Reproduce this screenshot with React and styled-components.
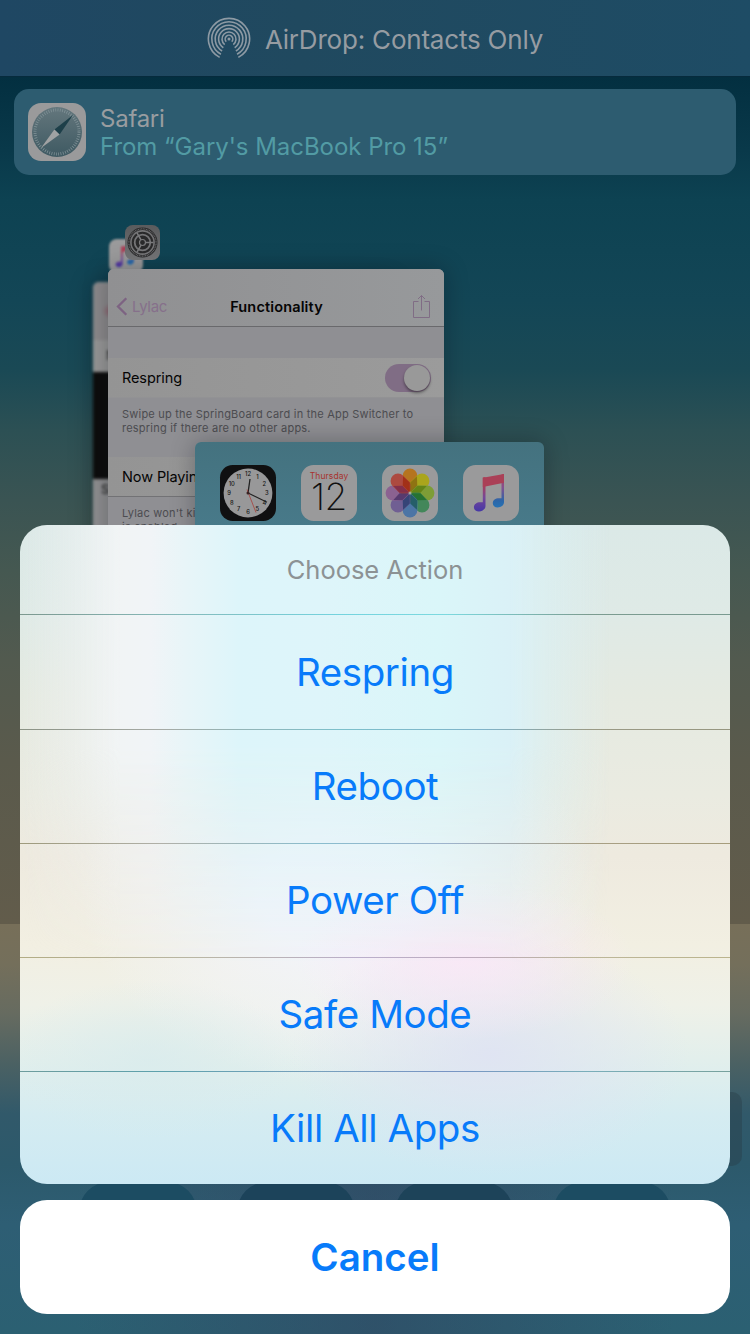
import React from "react";
import styled, { createGlobalStyle } from "styled-components";

const GlobalStyle = createGlobalStyle`
  * { box-sizing: border-box; }
  body { margin: 0; background: #2d5c70; }
`;

const Screen = styled.main`
  position: relative;
  width: 750px;
  height: 1334px;
  overflow: hidden;
  font-family: Inter, "Liberation Sans", sans-serif;
  background: linear-gradient(
    180deg,
    #032f40 76px,
    #09394a 150px,
    #0d4252 200px,
    #134656 300px,
    #1a4955 370px,
    #2c5054 430px,
    #3a5453 500px,
    #455851 570px,
    #525a4f 660px,
    #5a5a4c 760px,
    #625c4b 924px
  );
`;

/* Control panel that rises from the bottom edge, behind the sheet */
const Dock = styled.div`
  position: absolute;
  inset: 924px 0 0;
  background: linear-gradient(90deg, transparent 10%, rgba(52, 60, 92, 0.4) 50%, transparent 90%),
    linear-gradient(
      180deg,
      #776f59 0,
      #746f5b 40px,
      #666b60 90px,
      #4b6163 140px,
      #31596a 190px,
      #2c596b 240px,
      #2e5e74 300px,
      #2b6072 410px
    );
`;

const DockTiles = styled.div`
  position: absolute;
  top: 258px;
  left: 79px;
  display: flex;
  gap: 40px;
`;

const DockTile = styled.span`
  width: 118px;
  height: 118px;
  border-radius: 30px;
  background: ${(p) => p.$tone};
`;

const DockSlider = styled.span`
  position: absolute;
  top: 168px;
  right: 8px;
  width: 60px;
  height: 74px;
  border-radius: 10px;
  background: rgba(40, 60, 70, 0.4);
`;

const Header = styled.header`
  position: relative;
  display: flex;
  align-items: center;
  justify-content: center;
  gap: 14px;
  height: 77px;
  padding-top: 2px;
  border-bottom: 1px solid #062b3d;
  background: linear-gradient(90deg, #1f4763, #20495f 40%, #1e4c65);
  color: #969ca2;
  font-size: 26px;
  letter-spacing: -0.2px;
`;

const HandoffBanner = styled.section`
  position: relative;
  display: flex;
  align-items: center;
  gap: 14px;
  height: 86px;
  margin: 12px 14px 0;
  padding: 0 14px;
  border-radius: 15px;
  background: #2d5c70;
`;

const BannerText = styled.div`
  display: flex;
  flex-direction: column;
  padding-top: 2px;
  font-size: 24px;
  line-height: 28px;
  color: #999da0;
`;

const BannerTitle = styled.span`
  letter-spacing: -0.25px;
`;

const BannerSource = styled.span`
  color: #529ba4;
  letter-spacing: -0.04px;
`;

/* App switcher cards overlap freely, so each one is placed on the canvas */
const Card = styled.article`
  position: absolute;
  left: ${(p) => p.$x}px;
  top: ${(p) => p.$y}px;
  width: ${(p) => p.$w}px;
  height: 640px;
  border-radius: 6px;
  overflow: hidden;
`;

const MusicCard = styled(Card)`
  background: #909092;
  filter: blur(1.4px);
`;

const CardBand = styled.div`
  height: ${(p) => p.$h}px;
  background: ${(p) => p.$tone};
  padding: ${(p) => p.$pad || "0"};
  color: ${(p) => p.$ink || "#333"};
  font-size: 13px;
  font-weight: 600;
`;

const CardShadow = styled.div`
  position: absolute;
  left: ${(p) => p.$x}px;
  top: ${(p) => p.$y}px;
  width: ${(p) => p.$w}px;
  height: 640px;
  border-radius: 6px;
  box-shadow: 0 0 24px rgba(0, 10, 15, 0.3);
`;

const SettingsCard = styled(Card)`
  background: #8f8f93;
  color: #050505;
  font-size: 15px;
`;

const NavBar = styled.div`
  display: grid;
  grid-template-columns: 1fr auto 1fr;
  align-items: center;
  height: 58px;
  padding: 18px 13px 0 8px;
  border-bottom: 1px solid #69696c;
  background: linear-gradient(90deg, #909092, #97999b);
`;

const BackLink = styled.span`
  display: flex;
  align-items: center;
  gap: 4px;
  color: #86708b;
  letter-spacing: -0.3px;
`;

const NavTitle = styled.span`
  padding-left: 6px;
  font-weight: 600;
  font-size: 14.5px;
  letter-spacing: 0.15px;
`;

const NavAction = styled.span`
  display: flex;
  justify-content: flex-end;
`;

const SettingRow = styled.div`
  display: flex;
  align-items: center;
  justify-content: space-between;
  height: ${(p) => p.$h}px;
  margin-top: ${(p) => p.$gap}px;
  padding: 0 13px 0 14px;
  border-bottom: 1px solid ${(p) => p.$line};
  background: linear-gradient(90deg, #949494, #9b9b9b);
  font-size: 14.5px;
  letter-spacing: -0.1px;
`;

const Toggle = styled.span`
  display: flex;
  justify-content: flex-end;
  width: 46px;
  height: 28px;
  padding: 1px;
  border-radius: 14px;
  background: #806d85;

  &::after {
    content: "";
    width: 26px;
    height: 26px;
    border-radius: 50%;
    background: #999;
    box-shadow: 0 2px 3px rgba(0, 0, 0, 0.4);
  }
`;

const Footnote = styled.p`
  margin: 0;
  padding: ${(p) => p.$top}px 14px 0;
  font-size: 11px;
  line-height: 14.3px;
  letter-spacing: 0.22px;
  color: #4c4c50;
  white-space: pre;
`;

const HomeCard = styled(Card)`
  display: flex;
  align-items: flex-start;
  gap: 25px;
  padding: 23px 25px;
  background: linear-gradient(180deg, #44727f, #487a8a 90px);
`;

const AppIcon = styled.div`
  display: flex;
  flex-direction: column;
  align-items: center;
  flex: none;
  width: ${(p) => p.$size}px;
  height: ${(p) => p.$size}px;
  border-radius: ${(p) => p.$size * 0.225}px;
  overflow: hidden;
  background: ${(p) => p.$fill || "#9a9a9b"};
`;

const FloatingIcon = styled(AppIcon)`
  position: absolute;
  left: ${(p) => p.$x}px;
  top: ${(p) => p.$y}px;
  filter: ${(p) => (p.$soft ? "blur(1.3px)" : "none")};
`;

const Weekday = styled.span`
  margin-top: 6px;
  font-size: 8.5px;
  line-height: 11px;
  letter-spacing: 0.1px;
  color: #a8322d;
`;

const DayNumber = styled.span`
  font-size: 37px;
  font-weight: 200;
  line-height: 30px;
  letter-spacing: -0.5px;
  color: #111;
`;

const SheetLayer = styled.div`
  position: absolute;
  inset: 0;
  display: flex;
  flex-direction: column;
  justify-content: flex-end;
  gap: 16px;
  padding: 20px;
`;

const Sheet = styled.section`
  position: relative;
  isolation: isolate;
  border-radius: 27px;
  overflow: hidden;
  background: radial-gradient(ellipse 170px 80px at 445px 435px, rgba(250, 231, 247, 0.85) 0, rgba(250, 231, 247, 0) 100%),
    radial-gradient(ellipse 200px 120px at 470px 530px, rgba(223, 227, 243, 0.9) 0, rgba(223, 227, 243, 0) 100%),
    radial-gradient(ellipse 150px 80px at 130px 535px, rgba(216, 235, 237, 0.7) 0, rgba(216, 235, 237, 0) 100%),
    radial-gradient(ellipse 260px 190px at 320px 370px, rgba(242, 244, 250, 0.95) 30%, rgba(244, 242, 250, 0) 100%),
    linear-gradient(
      180deg,
      #dbe9e7 0,
      #dfeae6 90px,
      #e5eae1 170px,
      #eaebe1 270px,
      #eeeadf 330px,
      #f2efe2 420px,
      #eff1e8 480px,
      #e2efec 535px,
      #d5ecf1 590px,
      #cce9f4 659px
    );

  &::before {
    content: "";
    position: absolute;
    z-index: -1;
    inset: 0 0 220px;
    background: linear-gradient(
      90deg,
      rgba(240, 243, 244, 0) 0,
      rgba(240, 243, 244, 0.5) 55px,
      #f1f4f5 100px,
      #f1f4f7 130px,
      #e8f5f8 165px,
      #ddf5fa 220px,
      #def5fa 300px,
      #daf6f9 420px,
      #daf1f7 490px,
      rgba(218, 241, 245, 0.6) 525px,
      rgba(222, 240, 240, 0) 590px
    );
    mask-image: linear-gradient(180deg, #000 0, #000 220px, transparent 100%);
  }
`;

const SheetTitle = styled.div`
  display: flex;
  align-items: center;
  justify-content: center;
  height: 89px;
  color: #8c9294;
  font-size: 25.5px;
  letter-spacing: -0.02px;
`;

const Separator = styled.div`
  height: 1px;
  background: linear-gradient(90deg, ${(p) => p.$tones.join(", ")});
`;

const SheetButton = styled.button`
  display: flex;
  align-items: center;
  justify-content: center;
  width: 100%;
  height: ${(p) => p.$h}px;
  padding: 0 0 ${(p) => p.$lift || 0}px;
  border: 0;
  background: none;
  color: #087bfa;
  font: inherit;
  font-size: 38.5px;
  letter-spacing: -0.42px;
`;

const CancelButton = styled(SheetButton)`
  flex: none;
  border-radius: 27px;
  background: #fff;
  font-weight: 600;
  letter-spacing: 0;
`;

function arc(r, halfGap) {
  const a = (halfGap * Math.PI) / 180;
  const dx = r * Math.sin(a);
  const dy = r * Math.cos(a);
  return `M${22 - dx} ${22 + dy}A${r} ${r} 0 1 1 ${22 + dx} ${22 + dy}`;
}

function AirDropIcon() {
  return (
    <svg width="44" height="44" viewBox="0 0 44 44" fill="none" stroke="#8d9aa4" strokeWidth="1.6">
      {[[20.6, 27], [17.2, 28], [13.8, 30], [10.4, 33], [7, 38], [3.8, 45]].map(([r, g]) => (
        <path key={r} d={arc(r, g)} />
      ))}
      <circle cx="22" cy="22" r="1.5" fill="#8d9aa4" stroke="none" />
    </svg>
  );
}

function SafariGlyph() {
  return (
    <svg width="58" height="58" viewBox="0 0 58 58">
      <defs>
        <linearGradient id="compass" x1="0" y1="0" x2="0" y2="1">
          <stop offset="0" stopColor="#64777d" />
          <stop offset="1" stopColor="#3e5962" />
        </linearGradient>
      </defs>
      <circle cx="29" cy="29" r="25" fill="url(#compass)" />
      <circle cx="29" cy="29" r="22" fill="none" stroke="#84959a" strokeWidth="3" strokeDasharray="0.7 1.604" />
      <path d="M45 12 26.4 26.4 31.6 31.6Z" fill="#1d3f49" />
      <path d="M13 45 26.4 26.4 31.6 31.6Z" fill="#a0a2a3" />
    </svg>
  );
}

function GearGlyph() {
  return (
    <svg width="35" height="35" viewBox="0 0 35 35" fill="none">
      <circle cx="17.5" cy="17.5" r="15" fill="#29292a" />
      <circle cx="17.5" cy="17.5" r="13.6" stroke="#6b6b6d" strokeWidth="1.2" strokeDasharray="0.9 0.7" />
      <circle cx="17.5" cy="17.5" r="11.6" stroke="#747476" strokeWidth="1.6" />
      <circle cx="17.5" cy="17.5" r="7.8" stroke="#747476" strokeWidth="1.8" />
      <path d="M20.500 17.500h8M16 14.900l-4-7M16 20.100l-4 7" stroke="#7a7a7c" strokeWidth="1.600" />
      <circle cx="17.500" cy="17.500" r="3" stroke="#7a7a7c" strokeWidth="1.200" />
    </svg>
  );
}

function MusicGlyph({ size, id }) {
  return (
    <svg width={size} height={size} viewBox="0 0 56 56">
      <defs>
        <linearGradient id={id} x1="0" y1="0" x2="0" y2="1">
          <stop offset="0" stopColor="#b03f55" />
          <stop offset="0.28" stopColor="#a5405f" />
          <stop offset="0.6" stopColor="#74469a" />
          <stop offset="1" stopColor="#4638a6" />
        </linearGradient>
        <linearGradient id={`${id}-r`} x1="0" y1="0" x2="0" y2="1">
          <stop offset="0" stopColor="#b03f55" />
          <stop offset="0.4" stopColor="#85508f" />
          <stop offset="0.8" stopColor="#2c66a8" />
          <stop offset="1" stopColor="#2672b4" />
        </linearGradient>
      </defs>
      <path d="M19.8 12.600 22.500 12V41c0 3-3 5.400-6.600 5.400-3 0-5-1.700-5-4.200 0-3 2.800-5 6.200-5h2.700Z" fill={`url(#${id})`} />
      <path d="M38.500 9.500 41 8.900V37.200c0 3-3 5.200-6.300 5.200-3 0-4.900-1.700-4.900-4.200 0-3 2.700-4.900 6-4.900h2.700Z" fill={`url(#${id}-r)`} />
      <path d="M19.800 12.800 41 8.900V17.800L19.800 21.900Z" fill="#aa4057" />
    </svg>
  );
}

const CLOCK_HOURS = [12, 1, 2, 3, 4, 5, 6, 7, 8, 9, 10, 11];

function ClockGlyph() {
  return (
    <svg width="56" height="56" viewBox="0 0 56 56" fontFamily="Inter, sans-serif" fontSize="5.800" fontWeight="500">
      <circle cx="28" cy="28" r="24.400" fill="#989899" />
      {CLOCK_HOURS.map((h, i) => {
        const a = (i * Math.PI) / 6;
        return (
          <text key={h} x={28 + 18.8 * Math.sin(a)} y={30.2 - 18.8 * Math.cos(a)} textAnchor="middle" fill="#151515">
            {h}
          </text>
        );
      })}
      <path d="M28 28 30 14" stroke="#222" strokeWidth="1.300" />
      <path d="M27 27.500 47 37.300" stroke="#222" strokeWidth="1.200" />
      <path d="M27 24.500 36 47.500" stroke="#a8403c" strokeWidth="0.800" />
      <circle cx="28" cy="28" r="1.500" fill="#3a2222" />
    </svg>
  );
}

const PETALS = ["#b5741f", "#aaa51c", "#7d9d36", "#43875a", "#4c75a5", "#705f93", "#8b6291", "#ad4a40"];
const PETAL_OVERLAPS = ["#8a6a10", "#5f8012", "#21702a", "#1f5a5e", "#2c3f72", "#4d3468", "#7c2a4c", "#a02c12"];

function PhotosGlyph() {
  return (
    <svg width="56" height="56" viewBox="0 0 56 56">
      {PETALS.map((fill, i) => (
        <rect
          key={fill}
          x="20.600"
          y="3.600"
          width="14.800"
          height="23.400"
          rx="7.400"
          fill={fill}
          transform={`rotate(${i * 45} 28 28)`}
        />
      ))}
      {PETAL_OVERLAPS.map((fill, i) => (
        <path
          key={fill}
          d="M28 27.500 24.200 18.200 28 10 31.800 18.200Z"
          fill={fill}
          fillOpacity="0.850"
          transform={`rotate(${i * 45 + 22.5} 28 28)`}
        />
      ))}
      <circle cx="28" cy="28" r="1.500" fill="#a5a59c" />
    </svg>
  );
}

function BackChevron() {
  return (
    <svg width="12" height="19" viewBox="0 0 12 19" fill="none" stroke="#7d6382" strokeWidth="2.300">
      <path d="M10.300 1.200 2 9.500l8.300 8.300" />
    </svg>
  );
}

function ShareGlyph() {
  return (
    <svg width="19" height="25" viewBox="0 0 19 25" fill="none" stroke="#806d85" strokeWidth="1">
      <path d="M6.500 7.500h-5v16h16v-16h-5M9.500 16.500v-15M6 5l3.500-3.500L13 5" />
    </svg>
  );
}

const ACTIONS = [
  { label: "Respring", h: 114, lift: 0, tones: ["#7c988f", "#86b7b7 20%", "#74d3de 45%", "#7cd9df 60%", "#7c9c90 80%", "#799a90"] },
  { label: "Reboot", h: 113, lift: 2, tones: ["#8b9385", "#a6aaa5 20%", "#7cc0cb 45%", "#7fb3ca 65%", "#9a9a85 80%", "#969680"] },
  { label: "Power Off", h: 113, lift: 2, tones: ["#9e9a7c", "#b0b0a8 20%", "#89bdce 42%", "#9db3cc 60%", "#a89f84 80%", "#a69d7c"] },
  { label: "Safe Mode", h: 113, lift: 2, tones: ["#b2ac84", "#b9b6a4 25%", "#baaecb 48%", "#bdacbb 65%", "#bcb698 80%", "#bbb48d"] },
  { label: "Kill All Apps", h: 112, lift: 0, tones: ["#6d9c9d", "#5da1ad 20%", "#78a0bd 42%", "#7894c4 60%", "#7aaeba 80%", "#77a19d"] },
];

export default function App() {
  return (
    <>
      <GlobalStyle />
      <Screen>
        <Dock>
          <DockSlider />
          <DockTiles>
            {["#1c4c62", "#1c435a", "#1d4359", "#1c4c62"].map((tone, i) => (
              <DockTile key={i} $tone={tone} />
            ))}
          </DockTiles>
        </Dock>

        <Header>
          <AirDropIcon />
          <span>AirDrop: Contacts Only</span>
        </Header>

        <HandoffBanner>
          <AppIcon $size={58}>
            <SafariGlyph />
          </AppIcon>
          <BannerText>
            <BannerTitle>Safari</BannerTitle>
            <BannerSource>From “Gary's MacBook Pro 15”</BannerSource>
          </BannerText>
        </HandoffBanner>

        <CardShadow $x={93} $y={282} $w={300} />
        <MusicCard $x={93} $y={282} $w={300}>
          <CardBand $h={58} $tone="radial-gradient(circle at 17px 29px, #8d5f6c 0, #8c8a8c 8px)" />
          <CardBand $h={32} $tone="#979797" $pad="7px 13px" $ink="#444">N</CardBand>
          <CardBand $h={107} $tone="#0d0d0d" />
          <CardBand $h={300} $tone="#8f8f91" $pad="2px 8px">S</CardBand>
        </MusicCard>
        <FloatingIcon $x={109} $y={239} $size={34} $soft>
          <MusicGlyph size={34} id="noteBack" />
        </FloatingIcon>

        <CardShadow $x={108} $y={269} $w={336} />
        <SettingsCard $x={108} $y={269} $w={336}>
          <NavBar>
            <BackLink>
              <BackChevron />
              Lylac
            </BackLink>
            <NavTitle>Functionality</NavTitle>
            <NavAction>
              <ShareGlyph />
            </NavAction>
          </NavBar>
          <SettingRow $h={40} $gap={31} $line="#929294">
            Respring
            <Toggle />
          </SettingRow>
          <Footnote $top={9}>{"Swipe up the SpringBoard card in the App Switcher to\nrespring if there are no other apps."}</Footnote>
          <SettingRow $h={40} $gap={21} $line="#727275">
            Now Playing
          </SettingRow>
          <Footnote $top={9}>{"Lylac won't kill\nis enabled."}</Footnote>
        </SettingsCard>
        <FloatingIcon $x={125} $y={225} $size={35} $fill="linear-gradient(#5a5b5d, #717274)">
          <GearGlyph />
        </FloatingIcon>

        <CardShadow $x={195} $y={442} $w={349} />
        <HomeCard $x={195} $y={442} $w={349}>
          <AppIcon $size={56} $fill="#101011">
            <ClockGlyph />
          </AppIcon>
          <AppIcon $size={56}>
            <Weekday>Thursday</Weekday>
            <DayNumber>12</DayNumber>
          </AppIcon>
          <AppIcon $size={56}>
            <PhotosGlyph />
          </AppIcon>
          <AppIcon $size={56}>
            <MusicGlyph size={56} id="noteFront" />
          </AppIcon>
        </HomeCard>

        <SheetLayer>
          <Sheet>
            <SheetTitle>Choose Action</SheetTitle>
            {ACTIONS.map(({ label, h, lift, tones }) => (
              <React.Fragment key={label}>
                <Separator $tones={tones} />
                <SheetButton $h={h} $lift={lift}>{label}</SheetButton>
              </React.Fragment>
            ))}
          </Sheet>
          <CancelButton $h={114}>Cancel</CancelButton>
        </SheetLayer>
      </Screen>
    </>
  );
}
